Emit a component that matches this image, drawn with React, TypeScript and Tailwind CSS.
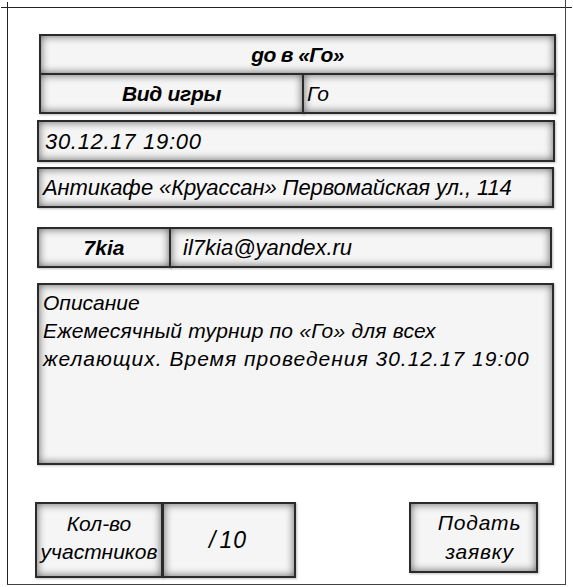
import React from 'react';

const box =
  "border-2 border-[#2b2b2b] bg-[#f5f5f5] shadow-[inset_0_0_9px_rgba(0,0,0,0.6),1px_1px_2px_rgba(0,0,0,0.25)]";

const Cell = ({ className = "", children }: { className?: string; children?: React.ReactNode }) => (
  <div className={`${box} flex items-center ${className}`}>{children}</div>
);

export default function App() {
  return (
    <div className="relative w-[573px] h-[587px] bg-white font-['Liberation_Sans',Arial,sans-serif] italic text-black text-[22px] overflow-hidden">
      {/* crop-mark style frame */}
      <div className="absolute left-[1px] top-[7px] w-[571px] h-px bg-[#222]" />
      <div className="absolute left-[7px] top-[2px] w-px h-[582px] bg-[#222]" />
      <div className="absolute left-[565px] top-0 w-px h-[584px] bg-[#444]" />
      <div className="absolute left-[7px] top-[584px] w-[559px] h-px bg-[#444]" />

      <div className="flex flex-col pt-[34px]">
        <Cell className="ml-[39px] w-[517px] h-[41px] justify-center font-bold text-[21px] tracking-[-0.6px]">
          go в «Го»
        </Cell>
        <div className="flex ml-[39px] w-[517px] h-[41px] -mt-[2px] text-[21px]">
          <Cell className="w-[265px] justify-center font-bold tracking-[-0.3px]">Вид игры</Cell>
          <Cell className="flex-1 -ml-[2px] pl-[3px]">Го</Cell>
        </div>

        <Cell className="ml-[37px] mt-[6px] w-[518px] h-[42px] pl-[6px] tracking-[0.7px]">30.12.17 19:00</Cell>
        <Cell className="ml-[37px] mt-[5px] w-[517px] h-[41px] pl-[4px] tracking-[-0.1px]">
          Антикафе «Круассан» Первомайская ул., 114
        </Cell>

        <div className="flex ml-[37px] mt-[19px] w-[515px] h-[41px] text-[21px]">
          <Cell className="w-[134px] justify-center font-bold">7kia</Cell>
          <Cell className="flex-1 -ml-[2px] pl-[12px] text-[22px]">il7kia@yandex.ru</Cell>
        </div>

        <div className={`${box} ml-[37px] mt-[15px] w-[517px] h-[182px] px-[4px] pt-[4px] leading-[28px] text-[21px]`}>
          <div>Описание</div>
          <div className="tracking-[0.2px]">Ежемесячный турнир по «Го» для всех</div>
          <div className="tracking-[1px]">желающих. Время проведения 30.12.17 19:00</div>
        </div>

        <div className="flex items-start mt-[37px] ml-[35px] w-[503px] text-[21px]">
          <Cell className="w-[128px] h-[76px] justify-center text-center leading-[28px] pb-[5px]">
            <span>
              Кол-во
              <br />
              участников
            </span>
          </Cell>
          <Cell className="w-[134px] h-[76px] -ml-[1px] justify-center pr-[2px] text-[23px] tracking-[1px]">
            <span className="mr-[3px]">/</span>10
          </Cell>
          <div className="flex-1" />
          <Cell className="w-[129px] h-[71px] justify-center text-center leading-[29px] pl-[12px] pb-[2px] tracking-[0.8px]">
            <span>
              Подать
              <br />
              заявку
            </span>
          </Cell>
        </div>
      </div>
    </div>
  );
}
